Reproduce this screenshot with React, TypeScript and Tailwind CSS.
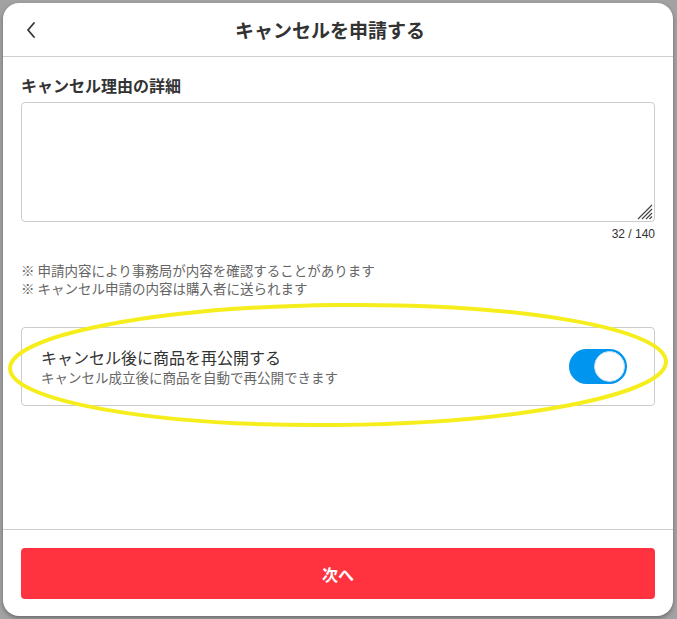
import React from "react";

const JP = { fontFamily: '"Noto Sans CJK JP", "Noto Sans", sans-serif' };

export default function App() {
  return (
    <div className="relative h-[619px] w-[677px] overflow-hidden bg-[#a2a2a2] p-[3px]" style={JP}>
      <div className="flex h-[613px] w-[670px] flex-col rounded-[16px] bg-white shadow-[0_2px_4px_rgba(0,0,0,0.35)]">
        {/* Header */}
        <div className="relative flex h-[54px] shrink-0 items-center justify-center border-b border-[#cfcfcf] pr-[16px]">
          <button className="absolute left-[16px] top-[15px] flex h-[24px] w-[24px] items-center justify-center">
            <svg width="12" height="18" viewBox="0 0 12 18" fill="none">
              <path d="M9 2L3 9l6 7" stroke="#333" strokeWidth="1.8" strokeLinecap="round" strokeLinejoin="round" />
            </svg>
          </button>
          <h1 className="text-[19px] font-bold leading-[24px] text-[#333]">キャンセルを申請する</h1>
        </div>

        {/* Content */}
        <div className="flex flex-1 flex-col px-[18px] pt-[16px]">
          <label className="text-[16px] font-bold leading-[24px] text-[#333]">キャンセル理由の詳細</label>
          <div className="relative mt-[5px]">
            <textarea className="block h-[120px] w-full resize-none rounded-[4px] border border-[#cccccc] bg-white p-2 text-[14px] outline-none" />
            <svg className="pointer-events-none absolute bottom-[2px] right-[2px]" width="18" height="18" viewBox="0 0 18 18">
              <path d="M17 3L3 17M17 7L7 17M17 11L11 17M17 14.5L14.5 17" stroke="#444" strokeWidth="1.2" />
            </svg>
          </div>
          <div className="mt-[4px] text-right text-[12px] leading-[16px] text-[#333]" style={{ fontFamily: '"Liberation Sans", Arial, sans-serif' }}>
            32 / 140
          </div>
          <div className="mt-[19px] text-[13.5px] text-[#666]">
            <p className="h-[18px] leading-[18px]">※ 申請内容により事務局が内容を確認することがあります</p>
            <p className="h-[18px] leading-[18px]">※ キャンセル申請の内容は購入者に送られます</p>
          </div>

          <div className="mt-[30px] flex items-center justify-between rounded-[4px] border border-[#cccccc] pb-[19px] pl-[19px] pr-[27px] pt-[18px]">
            <div className="flex flex-col">
              <span className="text-[16px] leading-[22px] text-[#333]">キャンセル後に商品を再公開する</span>
              <span className="text-[13.5px] leading-[18px] text-[#666]">キャンセル成立後に商品を自動で再公開できます</span>
            </div>
            <div className="flex h-[35px] w-[58px] items-center justify-end rounded-full bg-[#0095ee] p-[2px]">
              <div className="h-[31px] w-[31px] rounded-full border border-[#bfe0f6] bg-white" />
            </div>
          </div>
        </div>

        {/* Footer */}
        <div className="shrink-0 border-t border-[#cfcfcf] px-[18px] pb-[17px] pt-[18px]">
          <button className="flex h-[51px] w-full items-center justify-center rounded-[4px] bg-[#ff3340] text-[16px] font-bold text-white">
            次へ
          </button>
        </div>
      </div>

      {/* Yellow annotation ellipse */}
      <svg className="pointer-events-none absolute left-0 top-0" width="677" height="619" viewBox="0 0 677 619">
        <ellipse cx="338" cy="365" rx="328" ry="60" fill="none" stroke="#f6ee1c" strokeWidth="4" transform="rotate(-0.6 338 365)" />
      </svg>
    </div>
  );
}
